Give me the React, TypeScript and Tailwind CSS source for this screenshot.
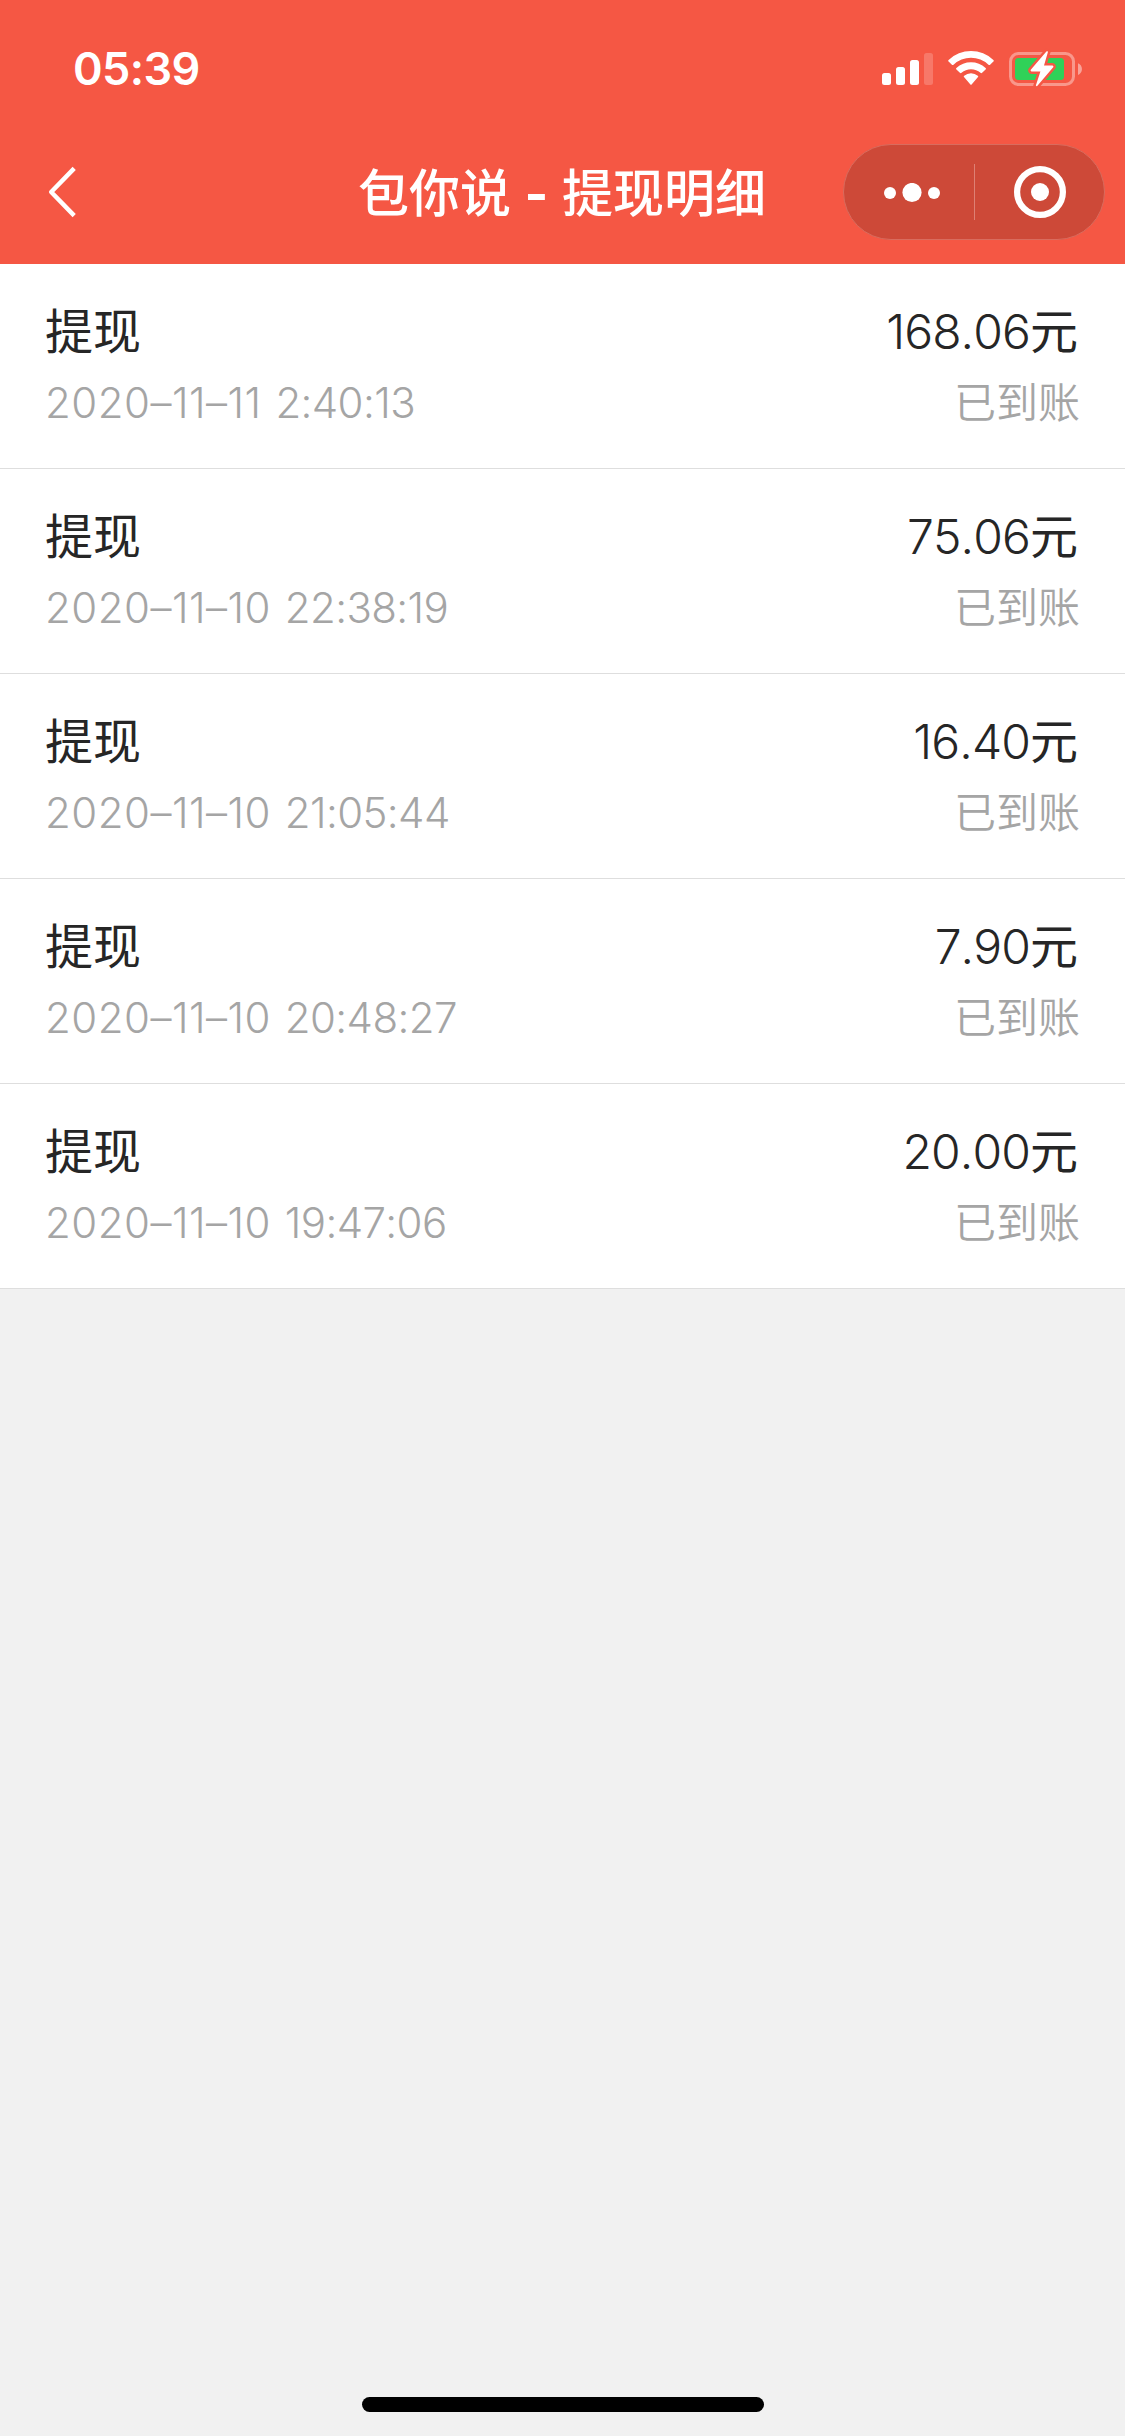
import React from 'react';

type Withdrawal = {
  id: number;
  time: string;
  amount: string;
};

const withdrawals: Withdrawal[] = [
  { id: 1, time: '2020–11–11 2:40:13', amount: '168.06' },
  { id: 2, time: '2020–11–10 22:38:19', amount: '75.06' },
  { id: 3, time: '2020–11–10 21:05:44', amount: '16.40' },
  { id: 4, time: '2020–11–10 20:48:27', amount: '7.90' },
  { id: 5, time: '2020–11–10 19:47:06', amount: '20.00' },
];

function StatusBar() {
  return (
    <div className="h-[120px] flex items-start justify-between pl-[73px] pr-[42px] pt-[42px]">
      <span className="text-[45px] leading-[54px] font-semibold tracking-[-0.6px]">05:39</span>
      <svg width="202" height="54" viewBox="0 0 202 54" fill="#fff">
        {/* signal */}
        <rect x="1" y="31" width="9" height="12" rx="2.5" />
        <rect x="15" y="25" width="9" height="18" rx="2.5" />
        <rect x="29" y="18" width="9" height="25" rx="2.5" />
        <rect x="43" y="11" width="9" height="32" rx="2.5" opacity="0.2" />
        {/* wifi */}
        <path d="M67.6 19.4a1 1 0 0 1 0-1.5a32.5 32.5 0 0 1 44.8 0a1 1 0 0 1 0 1.5l-3.3 3.3a1.2 1.2 0 0 1-1.6 0a25.4 25.4 0 0 0-35 0a1.2 1.2 0 0 1-1.6 0z" />
        <path d="M75.4 27.4a1 1 0 0 1 0-1.5a21.4 21.4 0 0 1 29.2 0a1 1 0 0 1 0 1.5l-3.5 3.4a1.2 1.2 0 0 1-1.6 0a14.4 14.4 0 0 0-19 0a1.2 1.2 0 0 1-1.6 0z" />
        <path d="M83.2 35.3a1 1 0 0 1 0-1.6a10.5 10.5 0 0 1 13.6 0a1 1 0 0 1 0 1.6l-6 6.9a1 1 0 0 1-1.6 0z" />
        {/* battery */}
        <rect x="129.5" y="11.5" width="63" height="31" rx="8" fill="none" stroke="#fff" strokeWidth="3" opacity="0.38" />
        <rect x="134" y="16" width="49" height="22" rx="3.5" fill="#30d158" />
        <path d="M197 21.2a6.4 6.4 0 0 1 0 11.8z" opacity="0.45" />
        <path
          d="M165.4 9.6L149.8 27.8a1 1 0 0 0 .8 1.6H159.4L155 43a.8.8 0 0 0 1.4.8L172.2 25.2a1 1 0 0 0-.8-1.6H163L166.8 10.4a.8.8 0 0 0-1.4-.8z"
          stroke="#f55744"
          strokeWidth="5"
          strokeLinejoin="round"
          paintOrder="stroke"
        />
      </svg>
    </div>
  );
}

function NavBar() {
  return (
    <div className="h-[144px] flex items-center">
      <div className="w-[282px] pl-[45px]">
        <svg width="36" height="54" viewBox="0 0 36 54" fill="none" stroke="#fff" strokeWidth="4.5" strokeLinejoin="round">
          <path d="M29.2 3.4L6.2 27L29.2 50.6" />
        </svg>
      </div>
      <h1 className="flex-1 pt-1 pr-px text-center text-[51px] leading-[72px] font-medium whitespace-nowrap">
        包你说 <span className="font-bold">-</span> 提现明细
      </h1>
      <div className="w-[282px] flex justify-end pr-5">
        <div className="w-[262px] h-24 rounded-full bg-[#cd4938] border border-[#d96c5e] flex items-center">
          <div className="w-[130px] flex justify-center">
            <svg width="56" height="20" viewBox="0 0 56 20" fill="#fff" className="mt-0.5 ml-1.5">
              <circle cx="6" cy="10" r="6" />
              <circle cx="28" cy="9.5" r="9.6" />
              <circle cx="50" cy="10" r="6" />
            </svg>
          </div>
          <div className="w-px h-14 bg-[#de8074]" />
          <div className="flex-1 flex justify-center">
            <svg width="52" height="52" viewBox="0 0 52 52" fill="#fff">
              <circle cx="26" cy="26" r="22.9" fill="none" stroke="#fff" strokeWidth="6.2" />
              <circle cx="26" cy="26" r="9" />
            </svg>
          </div>
        </div>
      </div>
    </div>
  );
}

function WithdrawalRow({ item }: { item: Withdrawal }) {
  const [date, clock] = item.time.split(' ');

  return (
    <li className="h-[205px] px-[45px] pt-[33px] border-b border-[#dedede] bg-white">
      <div className="flex justify-between text-[48px] leading-[70px] text-[#262626]">
        <span>提现</span>
        <span className="pr-0.5">
          <span className="font-[350] tracking-[-0.9px]">{item.amount}</span>元
        </span>
      </div>
      <div className="flex justify-between text-[42px] leading-[72px] font-[350] text-[#a5a5a5]">
        <span className="[word-spacing:2px]">
          <span className="tracking-[0.5px]">{date}</span> <span className="tracking-[-0.6px]">{clock}</span>
        </span>
        <span>已到账</span>
      </div>
    </li>
  );
}

export default function App() {
  return (
    <div className="w-[1125px] h-[2436px] flex flex-col bg-[#f1f1f1] font-['Inter','Noto_Sans_CJK_SC',sans-serif]">
      <header className="bg-[#f55744] text-white">
        <StatusBar />
        <NavBar />
      </header>
      <ul className="flex-1 [font-feature-settings:'calt'_0] [font-kerning:none]">
        {withdrawals.map((item) => (
          <WithdrawalRow key={item.id} item={item} />
        ))}
      </ul>
      <div className="flex justify-center pb-6">
        <div className="w-[402px] h-[15px] rounded-full bg-black" />
      </div>
    </div>
  );
}
